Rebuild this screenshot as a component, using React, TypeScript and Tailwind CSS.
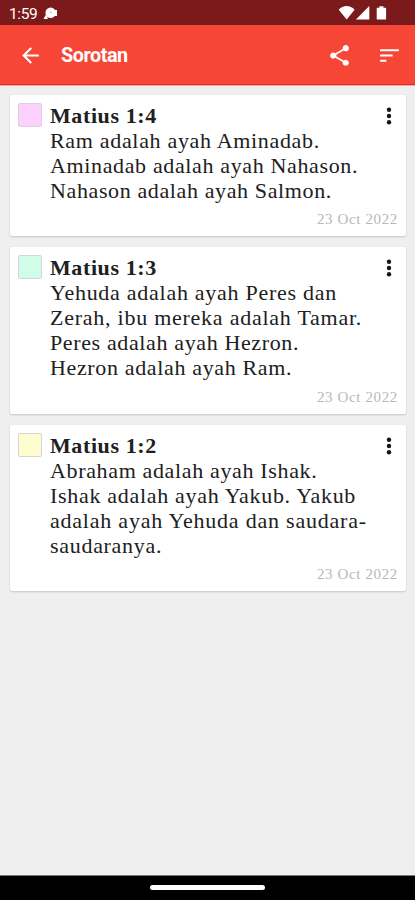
import React from "react";

type Line = { text: string; tracking: string };
type Highlight = { title: string; swatch: string; height: string; lines: Line[] };

const highlights: Highlight[] = [
  {
    title: "Matius 1:4",
    swatch: "bg-[#fdd0fd]",
    height: "h-[141px]",
    lines: [
      { text: "Ram adalah ayah Aminadab.", tracking: "tracking-[0.68px]" },
      { text: "Aminadab adalah ayah Nahason.", tracking: "tracking-[0.64px]" },
      { text: "Nahason adalah ayah Salmon.", tracking: "tracking-[0.62px]" },
    ],
  },
  {
    title: "Matius 1:3",
    swatch: "bg-[#d0fde8]",
    height: "h-[167px]",
    lines: [
      { text: "Yehuda adalah ayah Peres dan", tracking: "tracking-[0.73px]" },
      { text: "Zerah, ibu mereka adalah Tamar.", tracking: "tracking-[0.75px]" },
      { text: "Peres adalah ayah Hezron.", tracking: "tracking-[0.63px]" },
      { text: "Hezron adalah ayah Ram.", tracking: "tracking-[0.65px]" },
    ],
  },
  {
    title: "Matius 1:2",
    swatch: "bg-[#fdfdd0]",
    height: "h-[166px]",
    lines: [
      { text: "Abraham adalah ayah Ishak.", tracking: "tracking-[0.65px]" },
      { text: "Ishak adalah ayah Yakub. Yakub", tracking: "tracking-[0.69px]" },
      { text: "adalah ayah Yehuda dan saudara-", tracking: "tracking-[0.78px]" },
      { text: "saudaranya.", tracking: "tracking-[0.7px]" },
    ],
  },
];

function StatusBar() {
  return (
    <div className="flex h-[25px] items-center bg-[#7b1a1a] pr-[28px] pl-[9px] text-white">
      <span className="pt-[3px] text-[15.5px] leading-[22px] tracking-[-0.4px]">1:59</span>
      <svg className="mt-[2px] ml-[6px]" width="15" height="13" viewBox="0 0 15 13">
        <circle cx="7.6" cy="5.8" r="5.2" fill="#fff" />
        <path d="M3 7.5 0.5 12h4.5zM11 3h3v6h-3z" fill="#fff" />
        <path d="M6.2 4.6h3l-1.3 2.8z" fill="#e3c9c6" />
      </svg>
      <svg className="mt-[1px] ml-auto" width="49" height="16" viewBox="0 0 49 16" fill="#fff">
        <path d="M0.7 4.7C5-0.1 12.3-0.1 16.6 4.7L8.7 14.6z" />
        <path d="M31.3 1v13.6H17.9z" />
        <path d="M41.4 2.7V1.2h4v1.5h1.5c.8 0 1.2.4 1.2 1.2v9.5c0 .8-.4 1.2-1.2 1.2h-7c-.8 0-1.2-.4-1.2-1.2V3.9c0-.8.4-1.2 1.2-1.2z" />
      </svg>
    </div>
  );
}

function AppBar() {
  return (
    <header className="flex h-[60px] items-center border-b border-[#e02a20] bg-[#f74536] pt-[2px] pr-[13px] pl-[18px] text-white">
      <svg width="25" height="25" viewBox="0 0 24 24" fill="currentColor">
        <path d="M20 11H7.83l5.59-5.59L12 4l-8 8 8 8 1.41-1.41L7.83 13H20z" />
      </svg>
      <h1 className="mt-[1px] ml-[18px] text-[19.8px] leading-6 font-bold tracking-[-0.45px]">Sorotan</h1>
      <svg className="ml-auto" width="25" height="25" viewBox="0 0 24 24" fill="currentColor">
        <path d="M18 16.08c-.76 0-1.44.3-1.96.77L8.91 12.7c.05-.23.09-.46.09-.7s-.04-.47-.09-.7l7.05-4.11c.54.5 1.25.81 2.04.81 1.66 0 3-1.34 3-3s-1.34-3-3-3-3 1.34-3 3c0 .24.04.47.09.7L8.04 9.81C7.5 9.31 6.79 9 6 9c-1.66 0-3 1.34-3 3s1.34 3 3 3c.79 0 1.5-.31 2.04-.81l7.12 4.16c-.05.21-.08.43-.08.65 0 1.61 1.31 2.92 2.92 2.92s2.92-1.31 2.92-2.92-1.31-2.92-2.92-2.92" />
      </svg>
      <svg className="ml-[25px]" width="25" height="25" viewBox="0 0 24 24" fill="currentColor">
        <path d="M3 18h6v-2H3zM3 6v2h18V6zm0 7h12v-2H3z" />
      </svg>
    </header>
  );
}

function Card({ item }: { item: Highlight }) {
  return (
    <article
      className={`flex flex-col rounded-[2px] bg-white pr-[8px] pl-[8px] shadow-[0_1px_2px_rgba(0,0,0,0.18)] ${item.height}`}
    >
      <div className="flex pt-[8px]">
        <div className={`size-[24px] shrink-0 rounded-[2px] border border-[#d8d3d8] ${item.swatch}`} />
        <div className="ml-[8px] flex-1 text-[22px] leading-[25px] whitespace-nowrap text-[#202020]">
          <h2 className="font-bold tracking-[0.6px]">{item.title}</h2>
          {item.lines.map((line) => (
            <p key={line.text} className={line.tracking}>
              {line.text}
            </p>
          ))}
        </div>
        <svg className="mt-[4px] mr-[6px] shrink-0" width="6" height="18" viewBox="0 0 6 18" fill="#151515">
          <circle cx="3" cy="2.7" r="2.2" />
          <circle cx="3" cy="9" r="2.2" />
          <circle cx="3" cy="15.3" r="2.2" />
        </svg>
      </div>
      <p className="mt-auto mb-[8px] text-right text-[15px] leading-[18px] tracking-[0.63px] text-[#b8b8b8]">
        23 Oct 2022
      </p>
    </article>
  );
}

export default function App() {
  return (
    <div className="flex h-[900px] w-[415px] flex-col overflow-hidden bg-[#efefef] font-['Roboto',sans-serif]">
      <StatusBar />
      <AppBar />
      <main className="flex flex-1 flex-col gap-[11px] border-t border-[#fba8a4] pt-[9px] pr-[9px] pl-[10px] font-['Liberation_Serif',serif]">
        {highlights.map((item) => (
          <Card key={item.title} item={item} />
        ))}
      </main>
      <footer className="flex h-[25px] justify-center border-t border-[#777] bg-black pt-[9px]">
        <div className="h-[5px] w-[115px] rounded-full bg-white" />
      </footer>
    </div>
  );
}
